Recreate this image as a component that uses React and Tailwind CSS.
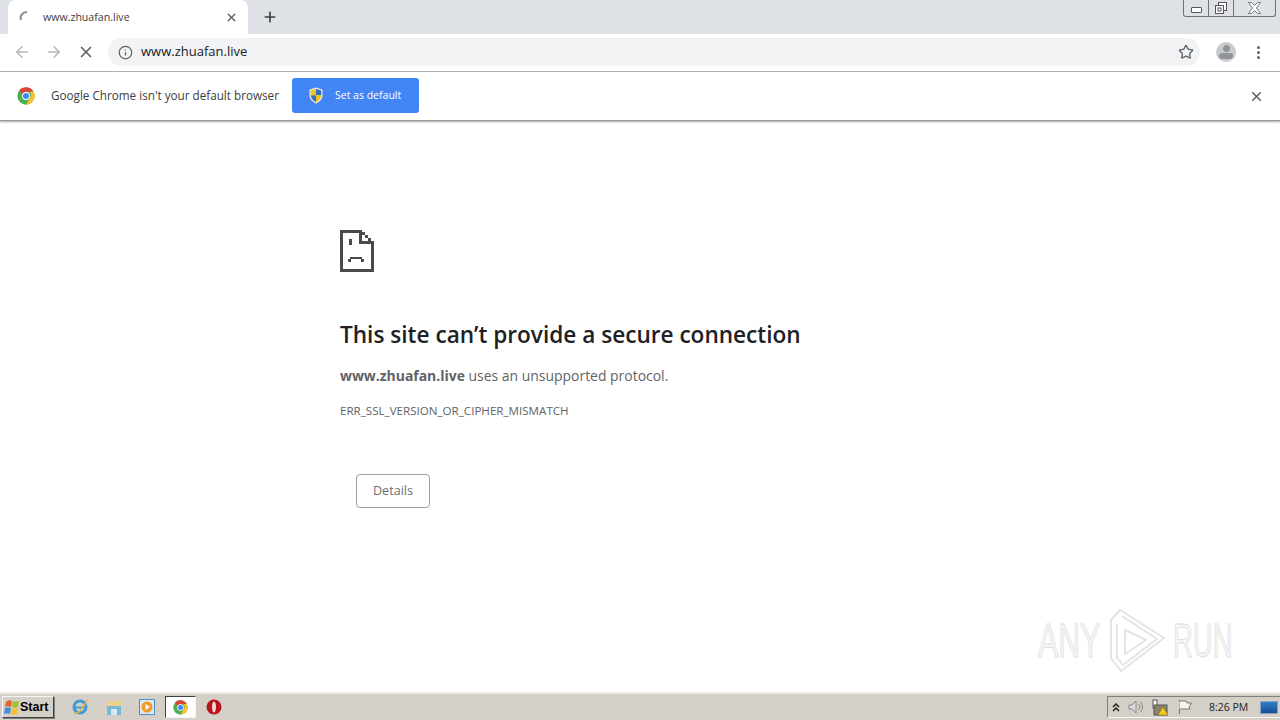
import React from 'react';
import { ArrowLeft, ArrowRight, X, Plus, Info, Star } from 'lucide-react';

const ui = "font-['Open_Sans','Noto_Sans',sans-serif]";

const ChromeLogo = ({ size = 18 }) => (
  <svg width={size} height={size} viewBox="0 0 48 48">
    <circle cx="24" cy="24" r="23" fill="#4caf50" />
    <path d="M24 1a23 23 0 0 1 20 11.5H24a11.5 11.5 0 0 0-10.6 7L5.5 8.6A23 23 0 0 1 24 1z" fill="#db4437" />
    <path d="M44 12.5A23 23 0 0 1 24 47l10-17.3A11.5 11.5 0 0 0 33 12.5z" fill="#fbc02d" />
    <circle cx="24" cy="24" r="10.5" fill="#fff" />
    <circle cx="24" cy="24" r="8" fill="#4285f4" />
  </svg>
);

const ShieldIcon = () => (
  <svg width="16" height="17" viewBox="0 0 16 17">
    <path d="M8 0.5 L14.5 2.5 V8.5 C14.5 12.5 11 15.2 8 16.5 C5 15.2 1.5 12.5 1.5 8.5 V2.5 Z" fill="#e8e4d0" />
    <path d="M8 2 L13.2 3.6 V8.2 H8 Z" fill="#2f6fc9" />
    <path d="M8 8.2 H2.8 C3 11.6 5.6 13.8 8 15 Z" fill="#2f6fc9" />
    <path d="M8 2 L2.8 3.6 V8.2 H8 Z" fill="#f2c21a" />
    <path d="M8 8.2 H13.2 C13 11.6 10.4 13.8 8 15 Z" fill="#f2c21a" />
  </svg>
);

const SadTab = () => (
  <svg width="34" height="42" viewBox="0 0 34 42" shapeRendering="crispEdges" fill="#4a4a4a">
    <path d="M0 0H19V3H3V39H31V14H34V42H0Z" />
    <path d="M19 0H22V11H31V14H19Z" />
    <rect x="22" y="2" width="3" height="3" />
    <rect x="25" y="5" width="3" height="3" />
    <rect x="28" y="8" width="3" height="3" />
    <rect x="31" y="11" width="3" height="3" />
    <rect x="9" y="9" width="3" height="6" />
    <rect x="10" y="27" width="12" height="2" />
    <rect x="8" y="29" width="3" height="3" />
    <rect x="21" y="29" width="3" height="3" />
  </svg>
);

const Watermark = () => (
  <div className="absolute left-[1038px] top-[608px] h-[65px] flex items-center select-none font-['Liberation_Sans',sans-serif] text-[49px] leading-none text-[#f6f6f6] [-webkit-text-stroke:1px_#e0e0e0]">
    <span className="w-[64px] whitespace-nowrap origin-left scale-x-[0.62]">ANY</span>
    <svg width="58" height="65" viewBox="0 0 58 65" fill="none" stroke="#e4e4e4" strokeWidth="2" className="ml-[6px]">
      <path d="M3 12 L12 2 L56 30 L13 63 L3 50 Z" />
      <path d="M9 16 L9 50 L15 57 L49 31 L14 8" />
      <path d="M17 22 L38 32 L17 46 Z" />
    </svg>
    <span className="ml-[7px] w-[60px] whitespace-nowrap origin-left scale-x-[0.56]">RUN</span>
  </div>
);

const TabStrip = () => (
  <div className="h-[34px] bg-[#dee1e6] flex items-end relative">
    <div className="ml-2 w-[240px] h-[34px] bg-white rounded-t-lg flex items-center">
      <svg width="14" height="14" viewBox="0 0 14 14" fill="none" className="ml-[11px]">
        <path d="M2 10 A6 6 0 0 1 8 2" stroke="#8a8d91" strokeWidth="2" />
      </svg>
      <span className="ml-[10px] mt-[2px] text-[10.6px] text-[#3c4043] flex-1">www.zhuafan.live</span>
      <X size={13} strokeWidth={2.5} className="mr-[10px] text-[#5f6368]" />
    </div>
    <Plus size={16} strokeWidth={2.5} className="ml-[14px] mb-[9px] text-[#3c4043]" />
    <div className="absolute right-[4px] top-0 w-[93px] h-[17px] border border-t-0 border-[#6e7379] rounded-b-[3px] flex">
      <div className="w-[25px] border-r border-[#6e7379] flex items-center justify-center">
        <div className="w-[11px] h-[6px] border border-[#555] rounded-[1px] bg-white mt-[3px]" />
      </div>
      <div className="w-[25px] border-r border-[#6e7379] flex items-center justify-center">
        <svg width="12" height="12" viewBox="0 0 12 12" fill="#fff" stroke="#555">
          <rect x="3.5" y="0.5" width="8" height="8" />
          <rect x="0.5" y="3.5" width="8" height="8" />
          <rect x="3" y="6" width="3" height="3" />
        </svg>
      </div>
      <div className="flex-1 flex items-center justify-center">
        <svg width="13" height="12" viewBox="0 0 13 12" fill="#fff" stroke="#777">
          <path d="M0.5 0.5H3.5L6.5 3.5L9.5 0.5H12.5L8.5 6L12.5 11.5H9.5L6.5 8.5L3.5 11.5H0.5L4.5 6Z" />
        </svg>
      </div>
    </div>
  </div>
);

const Toolbar = () => (
  <div className="h-[38px] bg-white border-b border-[#b4b4b4] flex items-center pb-[1px]">
    <ArrowLeft size={18} strokeWidth={2} className="ml-[13px] text-[#b4b7bb]" />
    <ArrowRight size={18} strokeWidth={2} className="ml-[14px] text-[#b4b7bb]" />
    <X size={18} strokeWidth={2.25} className="ml-[14px] text-[#5f6368]" />
    <div className="ml-[13px] w-[1092px] h-[28px] rounded-full bg-[#f1f3f4] flex items-center">
      <Info size={15} strokeWidth={2} className="ml-[10px] text-[#5f6368]" />
      <span className="ml-[8px] text-[13px] text-[#202124] flex-1">www.zhuafan.live</span>
      <Star size={16} strokeWidth={2} className="mr-[6px] text-[#5f6368]" />
    </div>
    <div className="ml-[16px] w-5 h-5 rounded-full bg-[#c9cbce] overflow-hidden flex flex-col items-center">
      <div className="mt-[3px] w-[7px] h-[7px] rounded-full bg-[#909397]" />
      <div className="mt-[1px] w-[14px] h-[6px] rounded-full bg-[#909397]" />
    </div>
    <div className="ml-[21px] flex flex-col gap-[2px]">
      <div className="w-[3px] h-[3px] rounded-full bg-[#5f6368]" />
      <div className="w-[3px] h-[3px] rounded-full bg-[#5f6368]" />
      <div className="w-[3px] h-[3px] rounded-full bg-[#5f6368]" />
    </div>
  </div>
);

const Infobar = () => (
  <div className="h-[49px] bg-white border-b border-[#999999] shadow-[0_1px_2px_rgba(0,0,0,0.35)] flex items-center relative">
    <div className="ml-[17px]"><ChromeLogo /></div>
    <span className="ml-[16px] text-[11.7px] text-[#3c4043] w-[241px] whitespace-nowrap">Google Chrome isn't your default browser</span>
    <button className="mb-[2px] w-[127px] h-[35px] bg-[#4285f4] rounded-[3px] flex items-center text-white text-[10.5px]">
      <span className="ml-[16px]"><ShieldIcon /></span>
      <span className="ml-[11px] mt-[2px]">Set as default</span>
    </button>
    <X size={15} strokeWidth={2.5} className="ml-auto mr-[16px] text-[#5f6368]" />
  </div>
);

const ErrorPage = () => (
  <div className="flex-1 bg-white pl-[340px] pt-[109px]">
    <SadTab />
    <h1 className="mt-[47px] text-[22.6px] leading-[32px] font-semibold text-[#202124]">This site can’t provide a secure connection</h1>
    <p className="mt-[15px] text-[13.95px] leading-[20px] text-[#5f6368]">
      <span className="font-bold">www.zhuafan.live</span> uses an unsupported protocol.
    </p>
    <p className="mt-[18px] text-[11.6px] leading-[14px] text-[#5f6368]">ERR_SSL_VERSION_OR_CIPHER_MISMATCH</p>
    <button className="mt-[56px] ml-[16px] w-[74px] h-[34px] border border-[#a0a0a0] rounded-[4px] text-[12.6px] text-[#6b6f74]">Details</button>
  </div>
);

const Taskbar = () => (
  <div className="h-[28px] bg-[#d4d0c8] border-t-2 border-[#ece9e2] flex items-center">
    <button className="ml-[2px] w-[52px] h-[22px] bg-[#d4d0c8] border border-[#f5f5f5] border-r-[#404040] border-b-[#404040] shadow-[1px_1px_0_#808080] flex items-center text-[12.5px] font-bold text-black font-['Liberation_Sans',sans-serif]">
      <svg width="17" height="17" viewBox="0 0 17 17">
        <path d="M3 3 C5 1 7 1 9 2 L8 8 C6 7 4 7 2 8 Z" fill="#e8622a" />
        <path d="M10 2 C12 3 14 3 16 2 L15 8 C13 9 11 9 9 8 Z" fill="#9cc22f" />
        <path d="M2 9 C4 8 6 8 8 9 L7 15 C5 14 3 14 1 15 Z" fill="#3f8fe0" />
        <path d="M9 9 C11 10 13 10 15 9 L14 15 C12 16 10 16 8 15 Z" fill="#f6c02c" />
      </svg>
      Start
    </button>
    {/* quick launch */}
    <svg width="18" height="18" viewBox="0 0 18 18" fill="none" className="ml-[17px]">
      <circle cx="9" cy="9" r="6" stroke="#3d9bd8" strokeWidth="3" />
      <path d="M3 9.5H15" stroke="#3d9bd8" strokeWidth="2" />
      <path d="M3 15 C7 17 14 8 16 2" stroke="#e3b53b" strokeWidth="1.5" />
    </svg>
    <svg width="16" height="17" viewBox="0 0 16 17" className="ml-[17px]">
      <rect x="1" y="2" width="14" height="14" fill="#7ab6d8" />
      <rect x="1" y="2" width="14" height="5" fill="#e8d28a" />
      <rect x="5" y="10" width="6" height="6" fill="#d8e8f0" />
    </svg>
    <svg width="16" height="16" viewBox="0 0 16 16" className="ml-[17px]">
      <rect x="0.5" y="0.5" width="15" height="15" fill="#dfe8f0" stroke="#4f8fc8" />
      <circle cx="8" cy="8" r="5.5" fill="#f09a2a" />
      <path d="M6.5 5 L11 8 L6.5 11 Z" fill="#fff" />
    </svg>
    <div className="ml-[10px] w-[31px] h-[22px] bg-white border border-[#404040] border-r-[#f5f5f5] border-b-[#f5f5f5] flex items-center justify-center">
      <ChromeLogo size={15} />
    </div>
    <svg width="16" height="16" viewBox="0 0 16 16" className="ml-[10px]">
      <circle cx="8" cy="8" r="7.5" fill="#b8141c" />
      <ellipse cx="8" cy="8" rx="2" ry="5.5" fill="#f0d8d8" />
    </svg>
    <div className="ml-auto w-[173px] h-[22px] border border-[#808080] border-r-0 border-b-[#f5f5f5] flex items-center">
      <svg width="8" height="9" viewBox="0 0 8 9" fill="none" stroke="#222" strokeWidth="1.5" className="ml-[4px]">
        <path d="M1 4 L4 1 L7 4 M1 8 L4 5 L7 8" />
      </svg>
      <svg width="17" height="16" viewBox="0 0 17 16" fill="none" stroke="#888" strokeWidth="1" className="ml-[8px]">
        <path d="M1 6H4L8 2V14L4 10H1Z" fill="#ddd" />
        <path d="M10.5 5 A4 4 0 0 1 10.5 11 M12.5 3 A7 7 0 0 1 12.5 13" />
      </svg>
      <svg width="17" height="17" viewBox="0 0 17 17" className="ml-[7px]">
        <rect x="1" y="1" width="4" height="8" fill="#fff" stroke="#555" />
        <rect x="2" y="6" width="13" height="10" fill="#8c8466" stroke="#555" />
        <path d="M11 8 L16 16 H6 Z" fill="#f2c81e" stroke="#8a6d00" strokeWidth="0.5" />
      </svg>
      <svg width="16" height="16" viewBox="0 0 16 16" fill="none" stroke="#777" className="ml-[8px]">
        <path d="M2.5 1V15" />
        <path d="M2.5 2 H9 L10 4 H14.5 L12 8 L13 10 H2.5" fill="#f5f5f0" />
      </svg>
      <span className="ml-[16px] mt-[1px] text-[10.5px] text-[#222] whitespace-nowrap">8:26 PM</span>
      <div className="ml-auto mr-[2px] w-[18px] h-[13px] bg-gradient-to-b from-[#2f7fc8] to-[#164f92] border border-[#8aa4bf]" />
    </div>
  </div>
);

export default function App() {
  return (
    <div className={`h-[720px] w-[1280px] flex flex-col overflow-hidden relative ${ui}`}>
      <TabStrip />
      <Toolbar />
      <Infobar />
      <ErrorPage />
      <Watermark />
      <Taskbar />
    </div>
  );
}
